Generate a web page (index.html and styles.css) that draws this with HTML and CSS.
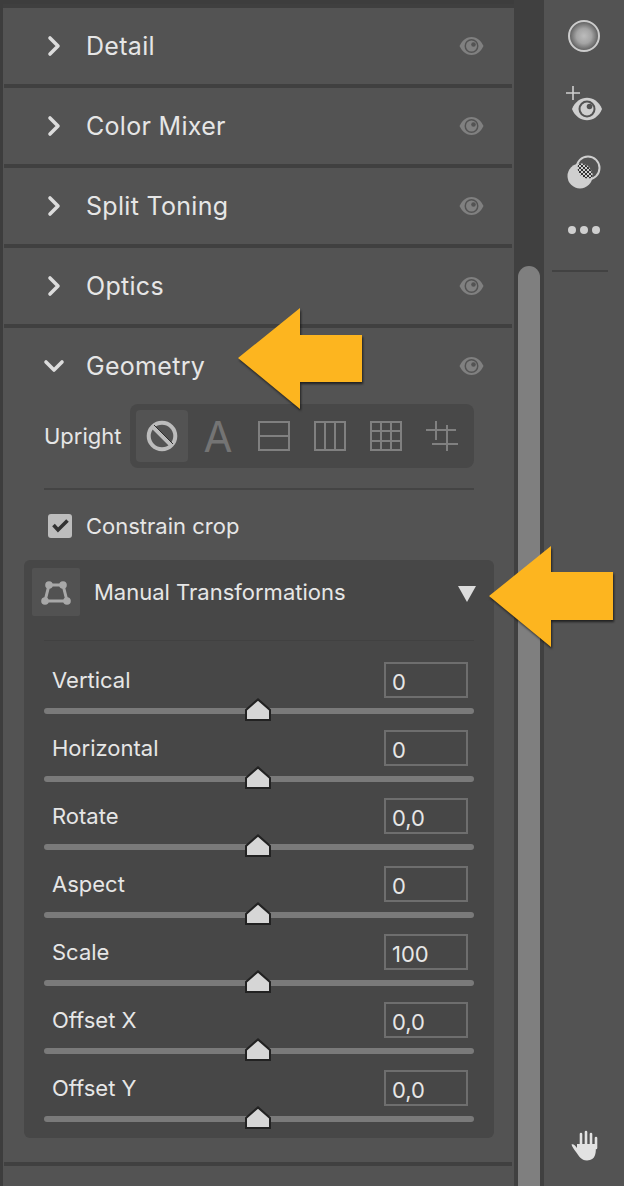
FILE: index.html
```html
<!DOCTYPE html>
<html lang="en">
<head>
  <meta charset="UTF-8">
  <meta name="viewport" content="width=device-width, initial-scale=1.0">
  <title>Geometry panel</title>
  <link rel="stylesheet" href="styles.css">
</head>
<body>
  <svg class="defs" width="0" height="0">
    <symbol id="eye" viewBox="0 0 25 18">
      <path d="M0.5 9C6 -3 19 -3 24.500 9C19 21 6 21 0.500 9Z" fill="#808080"/>
      <circle cx="12.500" cy="9" r="7" fill="#535353"/>
      <circle cx="12.500" cy="9" r="5.500" fill="#808080"/>
      <circle cx="14.500" cy="7.500" r="2.300" fill="#535353"/>
    </symbol>
    <symbol id="chev-right" viewBox="0 0 14 22">
      <path d="M3 3L11 11L3 19" fill="none" stroke="#dcdcdc" stroke-width="3.6" stroke-linecap="round" stroke-linejoin="round"/>
    </symbol>
    <symbol id="thumb" viewBox="0 0 26 23">
      <path d="M1 22V12L13 1.400L25 12V22Z" fill="#d6d6d6" stroke="#222" stroke-width="2"/>
    </symbol>
  </svg>

  <div class="app">
    <main class="panels">
      <section class="row">
        <svg class="chev"><use href="#chev-right"/></svg>
        <h2>Detail</h2>
        <svg class="eye"><use href="#eye"/></svg>
      </section>
      <section class="row">
        <svg class="chev"><use href="#chev-right"/></svg>
        <h2>Color Mixer</h2>
        <svg class="eye"><use href="#eye"/></svg>
      </section>
      <section class="row">
        <svg class="chev"><use href="#chev-right"/></svg>
        <h2>Split Toning</h2>
        <svg class="eye"><use href="#eye"/></svg>
      </section>
      <section class="row">
        <svg class="chev"><use href="#chev-right"/></svg>
        <h2>Optics</h2>
        <svg class="eye"><use href="#eye"/></svg>
      </section>

      <section class="geometry">
        <div class="row row-open">
          <svg class="chev-down" viewBox="0 0 22 14"><path d="M3 3L11 11L19 3" fill="none" stroke="#dcdcdc" stroke-width="3.6" stroke-linecap="round" stroke-linejoin="round"/></svg>
          <h2>Geometry</h2>
          <svg class="eye"><use href="#eye"/></svg>
        </div>

        <div class="upright">
          <span class="label">Upright</span>
          <div class="tools">
            <div class="tool tool-on">
              <svg width="32" height="32" viewBox="0 0 32 32"><circle cx="16" cy="16" r="13.300" fill="none" stroke="#bcbcbc" stroke-width="4"/><path d="M6.500 6.500L25.500 25.500" stroke="#bcbcbc" stroke-width="4"/><path d="M8 5L27 24" stroke="#2e2e2e" stroke-width="1"/></svg>
            </div>
            <div class="tool tool-a">A</div>
            <div class="tool">
              <svg width="32" height="30" viewBox="0 0 32 30"><path d="M1 1H31V29H1ZM1 15H31" fill="none" stroke="#808080" stroke-width="2"/></svg>
            </div>
            <div class="tool">
              <svg width="32" height="30" viewBox="0 0 32 30"><path d="M1 1H31V29H1ZM11 1V29M21 1V29" fill="none" stroke="#808080" stroke-width="2"/></svg>
            </div>
            <div class="tool">
              <svg width="32" height="30" viewBox="0 0 32 30"><path d="M1 1H31V29H1ZM11 1V29M21 1V29M1 10H31M1 20H31" fill="none" stroke="#808080" stroke-width="2"/></svg>
            </div>
            <div class="tool">
              <svg width="32" height="30" viewBox="0 0 32 30"><path d="M0 9H30M6 23H32M10 0V19M21 4V30" fill="none" stroke="#808080" stroke-width="2"/></svg>
            </div>
          </div>
        </div>

        <div class="constrain">
          <svg width="24" height="24" viewBox="0 0 24 24"><rect width="24" height="24" rx="3" fill="#bdbdbd"/><path d="M5.500 11L10 16L19.500 6.500" fill="none" stroke="#333" stroke-width="3.600"/></svg>
          <span class="label">Constrain crop</span>
        </div>

        <div class="manual">
          <div class="manual-head">
            <div class="manual-icon">
              <svg width="32" height="28" viewBox="0 0 32 28"><path d="M9 7H23L27 23H5Z" fill="none" stroke="#a8a8a8" stroke-width="3"/><circle cx="9" cy="7" r="3.800" fill="#a8a8a8"/><circle cx="23" cy="7" r="3.800" fill="#a8a8a8"/><circle cx="27" cy="23" r="3.800" fill="#a8a8a8"/><circle cx="5" cy="23" r="3.800" fill="#a8a8a8"/></svg>
            </div>
            <span class="manual-title">Manual Transformations</span>
            <svg class="tri" width="18" height="16" viewBox="0 0 18 16"><path d="M0 0H18L9 16Z" fill="#dcdcdc"/></svg>
          </div>

          <div class="sliders">
            <div class="slider">
              <div class="slider-top"><span class="label">Vertical</span><span class="value">0</span></div>
              <div class="track"><svg class="knob"><use href="#thumb"/></svg></div>
            </div>
            <div class="slider">
              <div class="slider-top"><span class="label">Horizontal</span><span class="value">0</span></div>
              <div class="track"><svg class="knob"><use href="#thumb"/></svg></div>
            </div>
            <div class="slider">
              <div class="slider-top"><span class="label">Rotate</span><span class="value">0,0</span></div>
              <div class="track"><svg class="knob"><use href="#thumb"/></svg></div>
            </div>
            <div class="slider">
              <div class="slider-top"><span class="label">Aspect</span><span class="value">0</span></div>
              <div class="track"><svg class="knob"><use href="#thumb"/></svg></div>
            </div>
            <div class="slider">
              <div class="slider-top"><span class="label">Scale</span><span class="value">100</span></div>
              <div class="track"><svg class="knob"><use href="#thumb"/></svg></div>
            </div>
            <div class="slider">
              <div class="slider-top"><span class="label">Offset X</span><span class="value">0,0</span></div>
              <div class="track"><svg class="knob"><use href="#thumb"/></svg></div>
            </div>
            <div class="slider">
              <div class="slider-top"><span class="label">Offset Y</span><span class="value">0,0</span></div>
              <div class="track"><svg class="knob"><use href="#thumb"/></svg></div>
            </div>
          </div>
        </div>
      </section>
    </main>

    <div class="scroll"><div class="scroll-thumb"></div></div>

    <aside class="toolbar">
      <svg class="tb-ball" width="36" height="36" viewBox="0 0 36 36">
        <defs>
          <radialGradient id="ball">
            <stop offset="0" stop-color="#bcbcbc"/>
            <stop offset="0.500" stop-color="#a4a4a4"/>
            <stop offset="1" stop-color="#5a5a5a"/>
          </radialGradient>
        </defs>
        <circle cx="18" cy="18" r="15" fill="url(#ball)" stroke="#cccccc" stroke-width="2"/>
      </svg>
      <svg class="tb-eye" width="40" height="36" viewBox="0 0 40 36">
        <path d="M2 7H16M9 0V14" stroke="#cfcfcf" stroke-width="1.600"/>
        <path d="M8 23C14 8 32 8 38 23C32 38 14 38 8 23Z" fill="#cfcfcf"/>
        <circle cx="23" cy="23" r="8.500" fill="#535353"/>
        <circle cx="23" cy="23" r="6.500" fill="#cfcfcf"/>
        <circle cx="25.500" cy="20.500" r="2.800" fill="#535353"/>
      </svg>
      <svg class="tb-mask" width="34" height="34" viewBox="0 0 34 34">
        <defs>
          <pattern id="checker" width="4" height="4" patternUnits="userSpaceOnUse">
            <rect width="4" height="4" fill="#cfcfcf"/>
            <rect width="2" height="2" fill="#333"/>
            <rect x="2" y="2" width="2" height="2" fill="#333"/>
          </pattern>
          <clipPath id="overlap"><circle cx="13" cy="21" r="12.500"/></clipPath>
        </defs>
        <circle cx="13" cy="21" r="12.500" fill="#cfcfcf"/>
        <circle cx="21" cy="13" r="11.500" fill="url(#checker)" clip-path="url(#overlap)"/>
        <circle cx="21" cy="13" r="11.500" fill="none" stroke="#cfcfcf" stroke-width="2"/>
      </svg>
      <div class="tb-dots"><span></span><span></span><span></span></div>
      <div class="tb-line"></div>
      <svg class="tb-hand" width="28" height="32" viewBox="0 0 28 32">
        <path d="M11 16V4M16 16V2M21 16V4M26 18V8" stroke="#e2e2e2" stroke-width="2.600" stroke-linecap="round" fill="none"/>
        <path d="M1.500 14.500C3 13.500 5 15 7 18V14H25.500C26.500 22 26 30.500 17 30.500C11 30.500 9 26 6 22C4 19 2 17 1.500 14.500Z" fill="#e2e2e2"/>
      </svg>
    </aside>
  </div>

  <svg class="arrow arrow-one" width="126" height="103" viewBox="0 0 126 103"><polygon points="1,51 63,1 63,28 125,28 125,75 63,75 63,102" fill="#fdb51f"/></svg>
  <svg class="arrow arrow-two" width="126" height="103" viewBox="0 0 126 103"><polygon points="1,51 63,1 63,27 125,27 125,75 63,75 63,102" fill="#fdb51f"/></svg>
</body>
</html>
```

FILE: styles.css
```css
* {
  margin: 0;
  padding: 0;
  box-sizing: border-box;
}

body {
  position: relative;
  width: 624px;
  height: 1186px;
  overflow: hidden;
  background: #3d3d3d;
  color: #e6e6e6;
  font-family: Inter, "Liberation Sans", sans-serif;
}

.defs {
  position: absolute;
}

.app {
  display: flex;
  height: 1186px;
}

/* left column */
.panels {
  width: 511px;
  margin-left: 3px;
  margin-top: 4px;
  padding-top: 4px;
  background: #535353;
  box-shadow: inset 0 4px 0 #3f3f3f;
}

.row {
  display: flex;
  align-items: center;
  width: 508px;
  height: 80px;
  margin-left: 1px;
  padding-right: 28px;
  border-bottom: 4px solid #404040;
}

.row h2 {
  flex: 1;
  font-size: 25px;
  font-weight: 400;
  letter-spacing: 0.3px;
}

.chev {
  width: 14px;
  height: 22px;
  margin: 0 25px 0 43px;
}

.chev-down {
  width: 22px;
  height: 14px;
  margin: 0 21px 0 39px;
}

.eye {
  width: 25px;
  height: 18px;
}

.row-open {
  height: 76px;
  margin-left: 0;
  border-bottom: 0;
}

.geometry {
  margin-left: 1px;
  width: 508px;
  padding-bottom: 24px;
  border-bottom: 4px solid #404040;
}

.label {
  font-size: 22px;
}

.upright {
  display: flex;
  align-items: center;
  gap: 8px;
  margin: 0 38px 0 40px;
  padding-bottom: 20px;
  border-bottom: 2px solid #444;
}

.upright .label {
  width: 78px;
}

.tools {
  display: flex;
  gap: 4px;
  padding: 6px;
  background: #484848;
  border-radius: 8px;
}

.tool {
  display: flex;
  align-items: center;
  justify-content: center;
  width: 52px;
  height: 52px;
}

.tool-on {
  background: #535353;
  border-radius: 4px;
}

.tool-a {
  font-size: 42px;
  font-weight: 400;
  color: #747474;
}

.constrain {
  display: flex;
  align-items: center;
  gap: 14px;
  height: 24px;
  margin: 24px 0 22px 44px;
}

.manual {
  width: 470px;
  margin-left: 20px;
  padding-bottom: 16px;
  background: #474747;
  border-radius: 6px;
}

.manual-head {
  display: flex;
  align-items: center;
  padding: 8px 18px 25px 8px;
  margin-bottom: 21px;
  position: relative;
}

.manual-head::after {
  content: "";
  position: absolute;
  left: 20px;
  right: 20px;
  bottom: 0;
  height: 1px;
  background: #414141;
}

.manual-icon {
  display: flex;
  align-items: center;
  justify-content: center;
  width: 48px;
  height: 48px;
  background: #525252;
  border-radius: 2px;
}

.manual-title {
  flex: 1;
  margin-left: 14px;
  font-size: 22px;
}

.tri {
  margin-top: 4px;
}

.sliders {
  display: flex;
  flex-direction: column;
  gap: 16px;
  padding: 0 20px;
}

.slider-top {
  display: flex;
  align-items: center;
  justify-content: space-between;
  height: 36px;
  padding: 0 6px 0 8px;
  margin-bottom: 10px;
}

.value {
  width: 84px;
  height: 36px;
  padding: 0 6px;
  border: 2px solid #6e6e6e;
  font-size: 22px;
  line-height: 36px;
}

.track {
  position: relative;
  height: 6px;
  background: #7a7a7a;
  border-radius: 3px;
}

.knob {
  position: absolute;
  left: 201px;
  top: -10px;
  width: 26px;
  height: 23px;
}

/* scrollbar */
.scroll {
  width: 30px;
  padding: 266px 4px 0;
  background: #404040;
}

.scroll-thumb {
  height: 100%;
  background: #7f7f7f;
  border-radius: 11px 11px 0 0;
}

/* right toolbar */
.toolbar {
  display: flex;
  flex-direction: column;
  align-items: center;
  width: 80px;
  background: #535353;
}

.tb-ball {
  margin-top: 18px;
}

.tb-eye {
  margin-top: 32px;
}

.tb-mask {
  margin-top: 33px;
}

.tb-dots {
  display: flex;
  gap: 4px;
  margin-top: 37px;
}

.tb-dots span {
  width: 8px;
  height: 8px;
  background: #cfcfcf;
  border-radius: 50%;
}

.tb-line {
  width: 56px;
  height: 2px;
  margin: 36px 8px 0 0;
  background: #424242;
}

.tb-hand {
  margin-top: auto;
  margin-bottom: 24px;
}

/* callout arrows */
.arrow {
  position: absolute;
  filter: drop-shadow(1px 2px 1px rgba(0, 0, 0, 0.6));
}

.arrow-one {
  left: 237px;
  top: 307px;
}

.arrow-two {
  left: 488px;
  top: 545px;
}
```
